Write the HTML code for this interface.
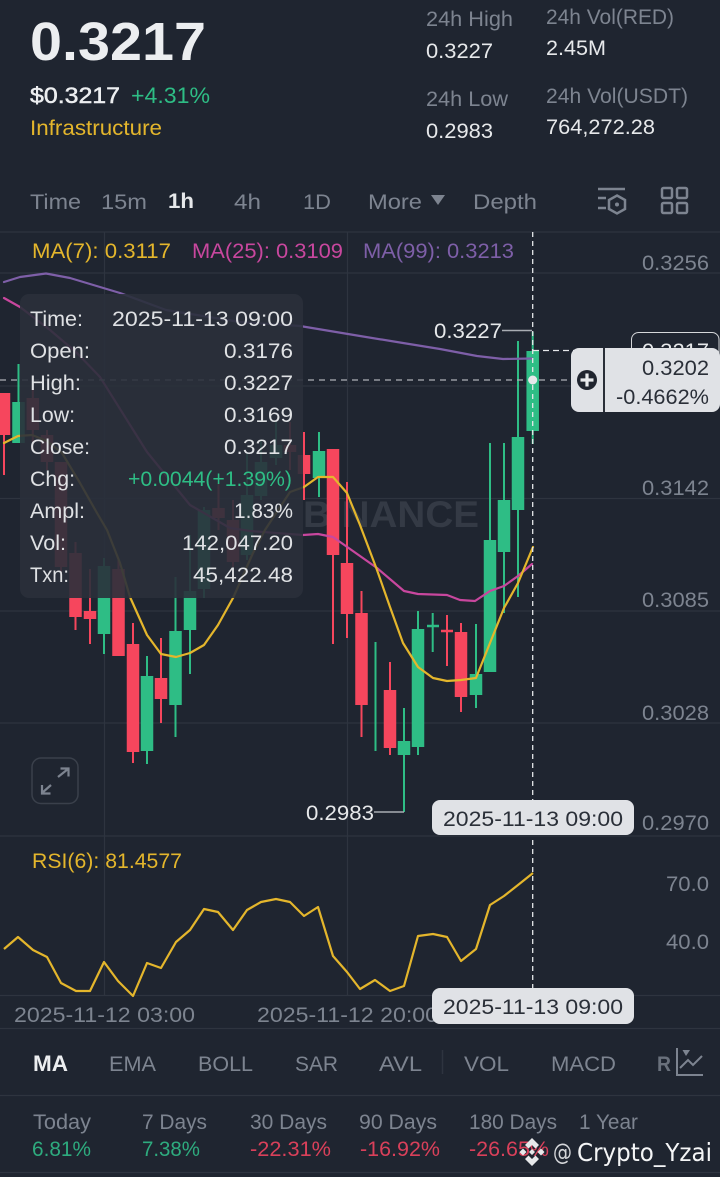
<!DOCTYPE html>
<html><head><meta charset="utf-8"><style>
html,body{margin:0;padding:0;background:#1f2530;width:720px;height:1177px;overflow:hidden}
svg{display:block}
text{font-family:"Liberation Sans",sans-serif;font-size:21px}
.g{fill:#7d8490}.w{fill:#e6e8ea}.d{fill:#2a2f38}
</style></head><body>
<svg width="720" height="1177" viewBox="0 0 720 1177" xmlns="http://www.w3.org/2000/svg">
<rect width="720" height="1177" fill="#1f2530"/>
<!-- grid -->
<path d="M0 232H720M0 273H720M0 386H720M0 498.500H720M0 611H720M0 723H720M0 836H720M0 995.500H720M0 1028.500H720M0 1095.500H720M0 1172.500H720M104.500 232V995M347.500 232V995" stroke="#2e343f" stroke-width="1.200" fill="none"/>
<text x="303" y="527" textLength="176" lengthAdjust="spacingAndGlyphs" style="font-size:37px;font-weight:bold" fill="#343a45">BINANCE</text>
<!-- header -->
<text x="30" y="60" textLength="176" lengthAdjust="spacingAndGlyphs" style="font-size:54px;font-weight:bold" fill="#eceef0">0.3217</text>
<text x="30" y="103" textLength="90" lengthAdjust="spacingAndGlyphs" style="font-size:22px" fill="#eceef0" stroke="#eceef0" stroke-width=".5">$0.3217</text>
<text x="131" y="103" textLength="79" lengthAdjust="spacingAndGlyphs" style="font-size:22px" fill="#2ebd85">+4.31%</text>
<text x="30" y="135" textLength="132" lengthAdjust="spacingAndGlyphs" fill="#e4b62c" style="font-size:21px">Infrastructure</text>
<text class="g" x="426" y="26" textLength="87" lengthAdjust="spacingAndGlyphs">24h High</text>
<text class="w" x="426" y="58" textLength="67" lengthAdjust="spacingAndGlyphs">0.3227</text>
<text class="g" x="546" y="24" textLength="128" lengthAdjust="spacingAndGlyphs">24h Vol(RED)</text>
<text class="w" x="546" y="55" textLength="60" lengthAdjust="spacingAndGlyphs">2.45M</text>
<text class="g" x="426" y="106" textLength="82" lengthAdjust="spacingAndGlyphs">24h Low</text>
<text class="w" x="426" y="138" textLength="67" lengthAdjust="spacingAndGlyphs">0.2983</text>
<text class="g" x="546" y="103" textLength="142" lengthAdjust="spacingAndGlyphs">24h Vol(USDT)</text>
<text class="w" x="546" y="134" textLength="109" lengthAdjust="spacingAndGlyphs">764,272.28</text>
<!-- tabs -->
<g style="font-size:22px">
<text class="g" x="30" y="209" textLength="51" lengthAdjust="spacingAndGlyphs">Time</text>
<text class="g" x="101" y="209" textLength="46" lengthAdjust="spacingAndGlyphs">15m</text>
<text class="w" x="168" y="208" textLength="26" lengthAdjust="spacingAndGlyphs" style="font-weight:bold">1h</text>
<text class="g" x="234" y="209" textLength="27" lengthAdjust="spacingAndGlyphs">4h</text>
<text class="g" x="303" y="209" textLength="28" lengthAdjust="spacingAndGlyphs">1D</text>
<text class="g" x="368" y="209" textLength="54" lengthAdjust="spacingAndGlyphs">More</text>
<text class="g" x="473" y="209" textLength="64" lengthAdjust="spacingAndGlyphs">Depth</text>
</g>
<path d="M431 195H445L438 205Z" fill="#7d8490"/>
<g fill="none" stroke="#7d8490" stroke-width="2.500">
<path d="M598 189H625M598 198H606M598 208H606M617 195.500L625 200V209L617 213.500L609 209V200Z"/>
<rect x="662" y="188" width="10" height="10" rx="1.500"/><rect x="677" y="188" width="10" height="10" rx="1.500"/>
<rect x="662" y="203" width="10" height="10" rx="1.500"/><rect x="677" y="203" width="10" height="10" rx="1.500"/>
</g>
<circle cx="617" cy="204.500" r="2" fill="#7d8490"/>
<!-- legend -->
<text x="32" y="258" textLength="139" lengthAdjust="spacingAndGlyphs" fill="#e4b62c">MA(7): 0.3117</text>
<text x="192" y="258" textLength="151" lengthAdjust="spacingAndGlyphs" fill="#c8479e">MA(25): 0.3109</text>
<text x="363" y="258" textLength="151" lengthAdjust="spacingAndGlyphs" fill="#7e5fa8">MA(99): 0.3213</text>
<!-- axis -->
<g class="g">
<text x="642" y="270" textLength="67" lengthAdjust="spacingAndGlyphs">0.3256</text>
<text x="642" y="495" textLength="67" lengthAdjust="spacingAndGlyphs">0.3142</text>
<text x="642" y="607" textLength="67" lengthAdjust="spacingAndGlyphs">0.3085</text>
<text x="642" y="720" textLength="67" lengthAdjust="spacingAndGlyphs">0.3028</text>
<text x="642" y="830" textLength="67" lengthAdjust="spacingAndGlyphs">0.2970</text>
<text x="666" y="891" textLength="43" lengthAdjust="spacingAndGlyphs">70.0</text>
<text x="666" y="949" textLength="43" lengthAdjust="spacingAndGlyphs">40.0</text>
<text x="14" y="1022" textLength="181" lengthAdjust="spacingAndGlyphs">2025-11-12 03:00</text>
<text x="257" y="1022" textLength="181" lengthAdjust="spacingAndGlyphs">2025-11-12 20:00</text>
</g>
<!-- red candles -->
<path fill="none" stroke="#f6465d" stroke-width="2" d="M4 393V475M32.800 388V442M47 430V470M61 462V575M75.500 542V630M90 569V644M118.500 560V656M133 623V763M161 638V723M218.500 483V530M233 500V567M290 422V470M304 432V500M333 449V644M347 482V638M361.500 591V737M390 662V755M447 615V666M461 623V712"/>
<path fill="none" stroke="#f6465d" stroke-width="12.500" d="M4 393V435M32.800 398V430M47 435V462M61 462V567M75.500 553V617M90 611V619M118.500 569V656M133 644V752M161 678V699M218.500 508V518M233 520V562M290 445V452M304 455V474M333 449V555M347 563V614M361.500 613V705M390 690V748M461 632V697"/>
<path fill="none" stroke="#f6465d" stroke-width="2.500" d="M441 631H453"/>
<!-- green candles -->
<path fill="none" stroke="#2ebd85" stroke-width="2" d="M18.500 364V443M104 558V654M147 656V764M175.500 577V737M190 535V674M204 507V598M247 453V560M261 440V500M276 422V465M319 432V497M375.500 642V751M404 708V812M418 611V755M432.700 613V652M476 624V708M490 443V672M504 443V613M518 341V597M532.700 332V444"/>
<path fill="none" stroke="#2ebd85" stroke-width="12.500" d="M18.500 402V443M104 566V634M147 676V751M175.500 631V705M190 591V630M204 510V589M247 495V555M261 462V496M276 445V458M319 451V478M404 741V755M418 629V747M476 674V695M490 540V672M504 500V552M518 437V510M532.700 351V431"/>
<path fill="none" stroke="#2ebd85" stroke-width="2.500" d="M427 626H439"/>
<!-- MAs -->
<g fill="none" stroke-width="2.200" stroke-linejoin="round" stroke-linecap="round">
<path stroke="#7e5fa8" d="M4 282L20 277L46 273.500L70 278L120 293L166 310L240 322L300 326L360 336L403 343L440 349L477 356L503 359L532 358.500"/>
<path stroke="#c8479e" d="M4 298L20 307L50 330L77 353L100 377L147 452L190 505L230 528L250 531L303 535L318 534L333 537L360 556L377 568L404 591L418 594L447 595L460 600L475 601L490 591L504 586L518 576L532 564"/>
<path stroke="#e4b62c" d="M4 443L18 436L32 435L47 441L62 453L80 483L97 513L107 530L120 563L130 597L147 635L161 654L176 657L190 653L204 645L218 625L233 598L253 553L265 530L290 492L304 487L318 477L333 477L347 493L360 525L377 570L390 607L403 643L418 667L433 678L447 681L461 680L476 678L490 643L504 608L518 583L533 547"/>
</g>
<!-- crosshair horizontal sits beneath the tooltip -->
<path d="M0 380H571" stroke="#aeb1b6" stroke-width="1.300" stroke-dasharray="6 5" fill="none"/>
<!-- tooltip -->
<rect x="20" y="294" width="283" height="304" rx="9" fill="#2a303b" opacity=".9"/>
<g fill="#dfe1e4">
<text x="30" y="326" textLength="53" lengthAdjust="spacingAndGlyphs">Time:</text>
<text x="30" y="358" textLength="60" lengthAdjust="spacingAndGlyphs">Open:</text>
<text x="30" y="390" textLength="51" lengthAdjust="spacingAndGlyphs">High:</text>
<text x="30" y="422" textLength="45" lengthAdjust="spacingAndGlyphs">Low:</text>
<text x="30" y="454" textLength="60" lengthAdjust="spacingAndGlyphs">Close:</text>
<text x="30" y="486" textLength="45" lengthAdjust="spacingAndGlyphs">Chg:</text>
<text x="30" y="518" textLength="55" lengthAdjust="spacingAndGlyphs">Ampl:</text>
<text x="30" y="550" textLength="36" lengthAdjust="spacingAndGlyphs">Vol:</text>
<text x="30" y="582" textLength="39" lengthAdjust="spacingAndGlyphs">Txn:</text>
<text x="112" y="326" textLength="181" lengthAdjust="spacingAndGlyphs">2025-11-13 09:00</text>
<text x="224" y="358" textLength="69" lengthAdjust="spacingAndGlyphs">0.3176</text>
<text x="224" y="390" textLength="69" lengthAdjust="spacingAndGlyphs">0.3227</text>
<text x="224" y="422" textLength="69" lengthAdjust="spacingAndGlyphs">0.3169</text>
<text x="224" y="454" textLength="69" lengthAdjust="spacingAndGlyphs">0.3217</text>
<text x="128" y="486" textLength="164" lengthAdjust="spacingAndGlyphs" fill="#2ebd85">+0.0044(+1.39%)</text>
<text x="234" y="518" textLength="59" lengthAdjust="spacingAndGlyphs">1.83%</text>
<text x="182" y="550" textLength="111" lengthAdjust="spacingAndGlyphs">142,047.20</text>
<text x="193" y="582" textLength="100" lengthAdjust="spacingAndGlyphs">45,422.48</text>
</g>
<!-- high/low marks -->
<text class="w" x="434" y="338" textLength="68" lengthAdjust="spacingAndGlyphs">0.3227</text>
<path d="M502 330.500H532M374 812H404" stroke="#a9adb3" stroke-width="1.500" fill="none"/>
<text class="w" x="306" y="820" textLength="68" lengthAdjust="spacingAndGlyphs">0.2983</text>
<!-- expand -->
<rect x="32" y="758" width="46" height="45.500" rx="9" fill="none" stroke="#3a404b" stroke-width="1.500"/>
<path d="M58 777L68 769M60.500 768.500H68.500V776.500M51 785L42 793M42 785V793.500H50.500" fill="none" stroke="#7d8490" stroke-width="2.200"/>
<!-- crosshair -->
<path d="M532.700 232V800M532.700 840V988" stroke="#e6e8ea" stroke-width="1.300" stroke-dasharray="5 4" fill="none"/>
<path d="M533 350.500H631" stroke="#e6e8ea" stroke-width="1.300" stroke-dasharray="6 4" fill="none"/>
<circle cx="532.700" cy="380" r="4.500" fill="#e6e8ea"/>
<rect x="631.500" y="332.500" width="87.500" height="37" rx="7" fill="#1f2530" stroke="#d5d7da" stroke-width="1"/>
<text class="w" x="642" y="358" textLength="67" lengthAdjust="spacingAndGlyphs">0.3217</text>
<rect x="571" y="348" width="149" height="64" rx="8" fill="#e0e2e6"/>
<rect x="603" y="348" width="2" height="64" fill="#2a2f38"/>
<circle cx="587" cy="380" r="10" fill="#20252f"/>
<path d="M587 373.500V386.500M580.500 380H593.500" stroke="#e8eaec" stroke-width="3.200"/>
<text class="d" x="642" y="375" textLength="67" lengthAdjust="spacingAndGlyphs">0.3202</text>
<text class="d" x="616" y="404" textLength="93" lengthAdjust="spacingAndGlyphs">-0.4662%</text>
<!-- date tags -->
<rect x="432" y="800" width="202" height="35" rx="8" fill="#e0e2e6"/>
<text class="d" x="443" y="826" textLength="180" lengthAdjust="spacingAndGlyphs">2025-11-13 09:00</text>
<!-- RSI -->
<text x="32" y="868" textLength="150" lengthAdjust="spacingAndGlyphs" fill="#e4b62c">RSI(6): 81.4577</text>
<path fill="none" stroke="#e4b62c" stroke-width="2.200" stroke-linejoin="round" d="M4 949L18 937L33 950L47 957L61 983L76 991L90 991L104 962L118 981L133 996L147 963L161 968L176 942L190 930L204 909L218 912L233 930L247 910L261 902L276 899L290 902L304 916L318 907L333 956L347 972L360 989L375 980L390 991L404 986L418 936L433 934L447 937L461 961L476 949L490 905L504 896L518 885L533 873"/>
<rect x="432" y="988" width="202" height="36" rx="8" fill="#e0e2e6"/>
<text class="d" x="443" y="1014" textLength="180" lengthAdjust="spacingAndGlyphs">2025-11-13 09:00</text>
<!-- indicators -->
<text x="33" y="1071" textLength="35" lengthAdjust="spacingAndGlyphs" style="font-size:22px;font-weight:bold" fill="#eceef0">MA</text>
<g style="font-size:22px">
<text class="g" x="109" y="1071" textLength="47" lengthAdjust="spacingAndGlyphs">EMA</text>
<text class="g" x="198" y="1071" textLength="55" lengthAdjust="spacingAndGlyphs">BOLL</text>
<text class="g" x="295" y="1071" textLength="43" lengthAdjust="spacingAndGlyphs">SAR</text>
<text class="g" x="379" y="1071" textLength="43" lengthAdjust="spacingAndGlyphs">AVL</text>
<text class="g" x="464" y="1071" textLength="45" lengthAdjust="spacingAndGlyphs">VOL</text>
<text class="g" x="551" y="1071" textLength="65" lengthAdjust="spacingAndGlyphs">MACD</text>
<text class="g" x="657" y="1071" textLength="14" lengthAdjust="spacingAndGlyphs" style="font-weight:bold" opacity=".8">R</text>
</g>
<path d="M442.500 1050V1074" stroke="#2e343f" stroke-width="1.500"/>
<path d="M677 1048V1075H703M680 1068L688 1060L693 1065L702 1056" fill="none" stroke="#7d8490" stroke-width="2"/>
<path d="M682.500 1050H690L686 1056Z" fill="#7d8490"/>
<!-- stats -->
<g class="g">
<text x="33" y="1129" textLength="58" lengthAdjust="spacingAndGlyphs">Today</text>
<text x="142" y="1129" textLength="65" lengthAdjust="spacingAndGlyphs">7 Days</text>
<text x="250" y="1129" textLength="77" lengthAdjust="spacingAndGlyphs">30 Days</text>
<text x="359" y="1129" textLength="78" lengthAdjust="spacingAndGlyphs">90 Days</text>
<text x="469" y="1129" textLength="88" lengthAdjust="spacingAndGlyphs">180 Days</text>
<text x="579" y="1129" textLength="59" lengthAdjust="spacingAndGlyphs">1 Year</text>
</g>
<text x="32" y="1156" textLength="59" lengthAdjust="spacingAndGlyphs" fill="#2eab7e">6.81%</text>
<text x="142" y="1156" textLength="58" lengthAdjust="spacingAndGlyphs" fill="#2eab7e">7.38%</text>
<g fill="#d9405a">
<text x="250" y="1156" textLength="81" lengthAdjust="spacingAndGlyphs">-22.31%</text>
<text x="360" y="1156" textLength="80" lengthAdjust="spacingAndGlyphs">-16.92%</text>
<text x="469" y="1156" textLength="80" lengthAdjust="spacingAndGlyphs">-26.65%</text>
</g>
<!-- watermark -->
<g fill="#e6e8ea">
<path d="M532 1138L539 1145L535.500 1148.500L532 1145L528.500 1148.500L525 1145ZM532 1166L539 1159L535.500 1155.500L532 1159L528.500 1155.500L525 1159ZM519.500 1152L523 1148.500L526.500 1152L523 1155.500ZM537.500 1152L541 1148.500L544.500 1152L541 1155.500ZM532 1149L535 1152L532 1155L529 1152Z"/>
</g>
<text x="553" y="1160" textLength="19" lengthAdjust="spacingAndGlyphs" style="font-family:'DejaVu Sans',sans-serif;font-size:23px" fill="#d5d7da">@</text>
<text x="577" y="1161" textLength="135" lengthAdjust="spacingAndGlyphs" style="font-family:'DejaVu Sans',sans-serif;font-size:25px" fill="#f4f5f6">Crypto_Yzai</text>
</svg>
</body></html>
